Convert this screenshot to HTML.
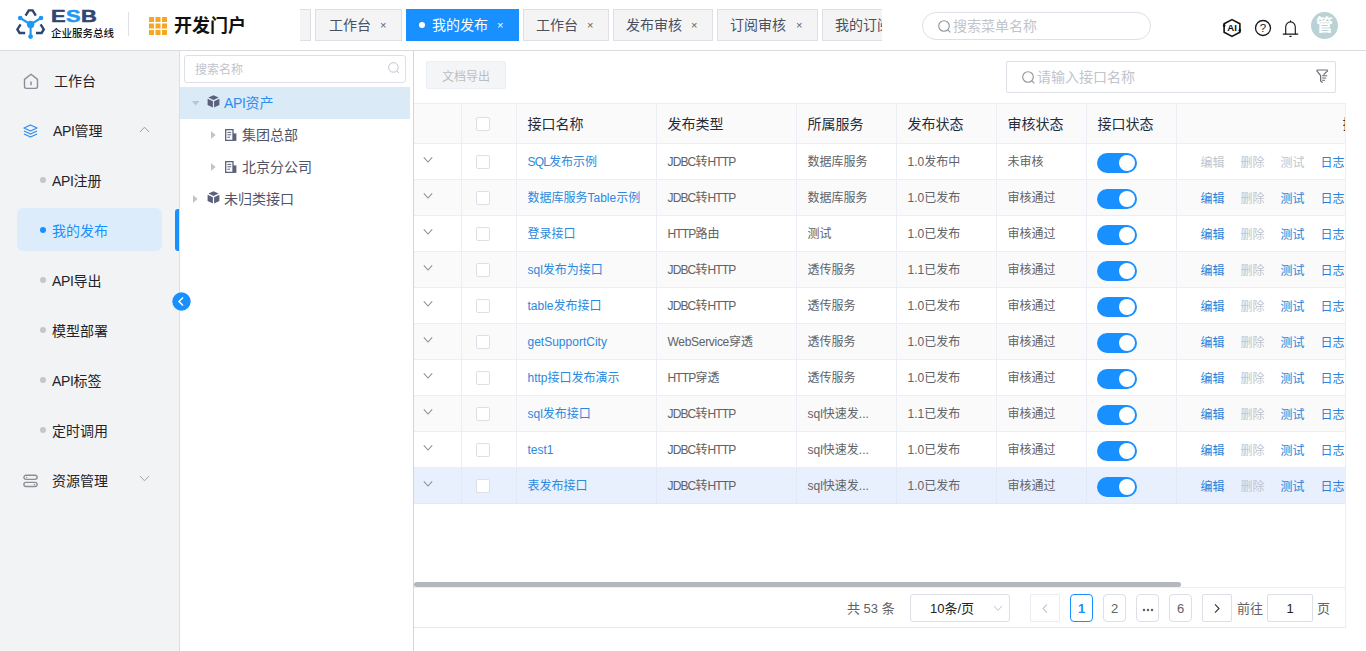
<!DOCTYPE html>
<html lang="zh-CN">
<head>
<meta charset="utf-8">
<title>开发门户</title>
<style>
*{box-sizing:border-box;margin:0;padding:0}
html,body{width:1366px;height:651px;overflow:hidden;background:#fff}
body{font-family:"Liberation Sans","Noto Sans CJK SC",sans-serif;font-size:14px;color:#303133;position:relative}
.abs{position:absolute}
u{text-decoration:none;letter-spacing:-0.35px}
table u{letter-spacing:-0.85px}
/* header */
#hdr{position:absolute;left:0;top:0;width:1366px;height:51px;background:#fff;border-bottom:1px solid #d9dbdf}
#logo-txt{position:absolute;left:51.4px;top:5.9px;font-weight:bold;font-size:17px;line-height:22px;letter-spacing:0.3px;color:#2f4573;transform:scaleX(1.29);transform-origin:0 50%;-webkit-text-stroke:0.5px currentColor}
#logo-txt b{color:#1e96f2}
#logo-sub{position:absolute;left:51px;top:27px;font-size:10.5px;line-height:13px;color:#111;font-weight:500;white-space:nowrap}
#hsep{position:absolute;left:128px;top:12px;width:1px;height:24px;background:#dcdfe6}
#grid{position:absolute;left:149px;top:17px;width:18px;height:18px}
#ptitle{position:absolute;left:174px;top:13px;font-size:18px;line-height:26px;font-weight:bold;color:#111;white-space:nowrap}
#tabs{position:absolute;left:300px;top:9px;width:582px;height:32px;overflow:hidden;white-space:nowrap}
.tab{position:absolute;top:0;height:32px;line-height:30px;border:1px solid #dcdfe6;background:#f4f4f5;color:#495060;font-size:14px;white-space:nowrap}
.tab .x{position:absolute;top:0;font-size:11px;color:#606266}
.tab.on{background:#1890ff;border-color:#1890ff;color:#fff}
.tab.on .x{color:#fff}
#hsearch{position:absolute;left:922px;top:12px;width:229px;height:28px;border:1px solid #dcdfe6;border-radius:14px;background:#fff}
#hsearch span{position:absolute;left:30px;top:0;line-height:26px;font-size:14px;color:#c0c4cc}
#avatar{position:absolute;left:1311px;top:12px;width:27px;height:27px;border-radius:50%;background:#b9d2d4;color:#fff;font-size:17px;font-weight:bold;line-height:28px;text-align:center}
/* sidebar */
#side{position:absolute;left:0;top:51px;width:180px;height:600px;background:#f2f3f5;border-right:1px solid #dddfe3}
.mi{position:absolute;left:0;width:180px;height:50px;line-height:50px;font-size:14px;color:#1f2329;white-space:nowrap}
.mi span{position:absolute;left:54px}
.sub span{position:absolute;left:52px}
.sub i{position:absolute;left:40px;top:21px;width:6px;height:6px;border-radius:50%;background:#c4c6cc}
.sub.on{color:#1890ff}
.sub.on i{background:#1890ff}
#selbg{position:absolute;left:17px;top:157px;width:145px;height:43px;border-radius:6px;background:#dcecfb}
#selbar{position:absolute;left:175px;top:157.5px;width:4px;height:42.5px;background:#1890ff;border-radius:3px 0 0 3px}
/* tree */
#tree{position:absolute;left:180px;top:51px;width:234px;height:600px;background:#fff;border-right:1px solid #d4d6da}
#tsearch{position:absolute;left:4px;top:4px;width:222px;height:28px;border:1px solid #dcdfe6;border-radius:3px}
#tsearch span{position:absolute;left:10px;top:1px;line-height:26px;font-size:12px;color:#c0c4cc}
.tn{position:absolute;left:0;width:230px;height:32px;line-height:32px;font-size:14px;color:#50546a;white-space:nowrap}
.tn.on{background:#dbeaf7;color:#2d8cf0}
/* main */
#main{position:absolute;left:414px;top:51px;width:932px;height:577px;background:#fff;border-bottom:1px solid #e6e8ec}
#btn{position:absolute;left:12px;top:10px;width:80px;height:28px;border:1px solid #ebeef5;background:#f4f5f7;border-radius:2px;color:#bcbec2;font-size:12px;line-height:31px;text-align:center}
#msearch{position:absolute;left:592px;top:10px;width:330px;height:32px;border:1px solid #dcdfe6;border-radius:2px}
#msearch span{position:absolute;left:30px;top:0;line-height:30px;font-size:14px;color:#c0c4cc}
table{position:absolute;left:0;top:52px;width:932px;border-collapse:collapse;table-layout:fixed;font-size:12px;color:#606266}
th,td{border:1px solid #ebeef5;border-left:none;height:36px;padding:0 10px 0 11px;text-align:left;font-weight:normal;white-space:nowrap;overflow:hidden;vertical-align:middle;line-height:20px}
th{height:40px;background:#fafafa;color:#252b3a;font-size:14px;padding-left:11px}
tr.s td{background:#fafafa}
tr.cur td{background:#e8f0fd;border-color:#e1e9f7}
td.lk{color:#2b88dd}
.cb{display:block;width:14px;height:14px;border:1px solid #dcdfe6;border-radius:2px;background:#fff;margin-left:3px}
.sw{display:block;margin-left:-1px;width:40px;height:20px;border-radius:10px;background:#1890ff;position:relative;top:1px}
.sw:after{content:"";position:absolute;right:2px;top:2px;width:16px;height:16px;border-radius:50%;background:#fff}
td.ops{padding-left:24px}
td.ops a{display:inline-block;width:24px;margin-right:16px;color:#2d7fd8;position:relative;top:1px}
td.ops a.d{color:#c0c4cc}
.chev{display:block;width:12px;height:12px;margin-left:-3px;margin-top:-4px}
/* pager */
#pager{position:absolute;left:0;top:543px;width:932px;height:30px;font-size:13px;color:#606266}
.pb{position:absolute;top:0;height:28px;width:23px;border:1px solid #dcdfe6;border-radius:4px;background:#fff;text-align:center;line-height:27px;font-size:13px;color:#606266}
.pb.on{border-color:#1890ff;color:#1890ff;font-weight:bold}
</style>
</head>
<body>
<div id="hdr">
<svg id="logo" class="abs" style="left:14px;top:7px" width="34" height="34" viewBox="0 0 34 34">
<g fill="none" stroke="#2f4573" stroke-width="2.4" stroke-linejoin="miter">
<path d="M11.6 8.6 L14.8 3.4 H18.6 L21.8 8.6"/>
<path d="M6.6 17.4 L3.4 22.4 L5.6 26 H11.2"/>
<path d="M26.6 17.4 L29.8 22.4 L27.6 26 H22"/>
</g>
<g stroke="#1e96f2" stroke-width="2.1" fill="none"><path d="M6.2 11 L16.6 17.4 L27 11 M16.6 17.4 V29.4"/></g>
<g fill="#1e96f2"><circle cx="16.6" cy="17.4" r="3.7"/><circle cx="6.2" cy="11" r="2.3"/><circle cx="27" cy="11" r="2.3"/><circle cx="16.6" cy="29.6" r="2.4"/></g>
</svg>
<div id="logo-txt">E<b>S</b>B</div>
<div id="logo-sub">企业服务总线</div>
<div id="hsep"></div>
<svg id="grid" viewBox="0 0 18 18"><g fill="#f5a623"><rect x="0" y="0" width="5" height="5"/><rect x="6.5" y="0" width="5" height="5"/><rect x="13" y="0" width="5" height="5"/><rect x="0" y="6.5" width="5" height="5"/><rect x="6.5" y="6.5" width="5" height="5"/><rect x="13" y="6.5" width="5" height="5"/><rect x="0" y="13" width="5" height="5"/><rect x="6.5" y="13" width="5" height="5"/><rect x="13" y="13" width="5" height="5"/></g></svg>
<div id="ptitle">开发门户</div>
<div id="tabs">
<div class="tab" style="left:-20px;width:31px"></div>
<div class="tab" style="left:15px;width:87px"><span class="abs" style="left:13px">工作台</span><span class="x" style="left:64px">×</span></div>
<div class="tab on" style="left:106px;width:113px"><i class="abs" style="left:12px;top:12px;width:6px;height:6px;border-radius:50%;background:#fff"></i><span class="abs" style="left:25px">我的发布</span><span class="x" style="left:90px">×</span></div>
<div class="tab" style="left:223px;width:86px"><span class="abs" style="left:12px">工作台</span><span class="x" style="left:63px">×</span></div>
<div class="tab" style="left:313px;width:100px"><span class="abs" style="left:12px">发布审核</span><span class="x" style="left:77px">×</span></div>
<div class="tab" style="left:417px;width:101px"><span class="abs" style="left:12px">订阅审核</span><span class="x" style="left:78px">×</span></div>
<div class="tab" style="left:522px;width:101px"><span class="abs" style="left:12px">我的订阅</span><span class="x" style="left:78px">×</span></div>
</div>
<div id="hsearch"><svg class="abs" style="left:14px;top:6px" width="15" height="15" viewBox="0 0 15 15"><circle cx="7" cy="7" r="5.3" fill="none" stroke="#8f939b" stroke-width="1.1"/><path d="M10.8 10.8 L13.4 13.4" stroke="#8f939b" stroke-width="1.1"/></svg><span>搜索菜单名称</span></div>
<svg class="abs" style="left:1221px;top:17px" width="22" height="22" viewBox="0 0 22 22"><g fill="none" stroke="#111" stroke-width="1.6" stroke-linejoin="round" stroke-linecap="round"><path d="M3.1 8.8 V6.8 L11 2.6 L18.9 6.8 V13"/><path d="M18.9 13.2 V15.2 L11 19.4 L3.1 15.2 V9.2"/></g><circle cx="3.2" cy="8.6" r="1.3" fill="#111"/><circle cx="18.8" cy="13.4" r="1.3" fill="#111"/><text x="11.1" y="14.4" font-family="Liberation Sans, sans-serif" font-weight="bold" font-size="9.6" text-anchor="middle" fill="#111">AI</text></svg>
<svg class="abs" style="left:1254px;top:19px" width="18" height="18" viewBox="0 0 18 18"><circle cx="9" cy="9" r="7.5" fill="none" stroke="#1a1a1a" stroke-width="1.3"/><text x="9" y="13.2" font-family="Liberation Sans, sans-serif" font-size="11.5" text-anchor="middle" fill="#1a1a1a">?</text></svg>
<svg class="abs" style="left:1281px;top:18.7px" width="19" height="19" viewBox="0 0 19 19"><g fill="none" stroke="#1a1a1a" stroke-width="1.15" stroke-linecap="round"><path d="M4.7 15 V8.2 A4.8 5.4 0 0 1 14.3 8.2 V15"/><path d="M2.2 15.1 H16.8"/><path d="M9.5 1.8 V2.6"/><path d="M8.8 17.3 H10.2"/></g></svg>
<div id="avatar">管</div>
</div>
<div id="side">
<div id="selbg"></div><div id="selbar"></div>
<div class="mi" style="top:5px"><svg class="abs" style="left:23px;top:16.5px" width="16" height="17" viewBox="0 0 16 17"><path d="M1.5 6.4 L8 1.2 L14.5 6.4 V13.6 A1.8 1.8 0 0 1 12.7 15.4 H3.3 A1.8 1.8 0 0 1 1.5 13.6 Z" fill="none" stroke="#8a8f99" stroke-width="1.4" stroke-linejoin="round"/><path d="M8 8.4 V12.2" stroke="#8a8f99" stroke-width="1.5"/></svg><span>工作台</span></div>
<div class="mi" style="top:55px"><svg class="abs" style="left:23px;top:18px" width="15" height="14" viewBox="0 0 15 14"><g fill="none" stroke="#2d8cf0" stroke-width="1.3" stroke-linejoin="round"><path d="M7.5 1 L14 4 L7.5 7 L1 4 Z"/><path d="M1 7 L7.5 10 L14 7"/><path d="M1 10 L7.5 13 L14 10"/></g></svg><span style="left:53px"><u>API</u>管理</span><svg class="abs" style="left:139px;top:19.5px" width="11" height="7" viewBox="0 0 11 7"><path d="M1 6 L5.5 1.2 L10 6" fill="none" stroke="#6fa8ea" stroke-width="1"/></svg></div>
<div class="mi sub" style="top:105px"><i></i><span><u>API</u>注册</span></div>
<div class="mi sub on" style="top:155px"><i></i><span>我的发布</span></div>
<div class="mi sub" style="top:205px"><i></i><span><u>API</u>导出</span></div>
<div class="mi sub" style="top:255px"><i></i><span>模型部署</span></div>
<div class="mi sub" style="top:305px"><i></i><span><u>API</u>标签</span></div>
<div class="mi sub" style="top:355px"><i></i><span>定时调用</span></div>
<div class="mi" style="top:405px"><svg class="abs" style="left:23px;top:18px" width="15" height="14" viewBox="0 0 15 14"><g fill="none" stroke="#8a8e96" stroke-width="1.4"><rect x="0.9" y="1.3" width="13.2" height="4.1" rx="2.05"/><rect x="0.9" y="8.4" width="13.2" height="4.1" rx="2.05"/></g><circle cx="3.6" cy="3.35" r="0.7" fill="#8a8e96"/><circle cx="11.4" cy="10.45" r="0.7" fill="#8a8e96"/></svg><span style="left:52px">资源管理</span><svg class="abs" style="left:139px;top:19.3px" width="11" height="7" viewBox="0 0 11 7"><path d="M1 1 L5.5 5.8 L10 1" fill="none" stroke="#a0a4ab" stroke-width="1"/></svg></div>
</div>
<div id="tree">
<div id="tsearch"><span>搜索名称</span><svg class="abs" style="left:202px;top:5px" width="14" height="14" viewBox="0 0 14 14"><circle cx="6.4" cy="6.4" r="4.8" fill="none" stroke="#c0c4cc" stroke-width="1"/><path d="M9.8 9.8 L12 12" stroke="#c0c4cc" stroke-width="1"/></svg></div>
<div class="tn on" style="top:36px"><svg class="abs" style="left:12px;top:14px" width="8" height="5" viewBox="0 0 8 5"><path d="M0 0 H7.4 L3.7 4.4 Z" fill="#c0c4cc"/></svg><svg class="abs cube" style="left:27px;top:8px" width="13" height="13" viewBox="0 0 13 13"><g fill="#5b607d"><path d="M6.5 0.2 L11.6 2.6 L6.5 5 L1.4 2.6 Z"/><path d="M0.6 3.7 L5.9 6.2 V12.6 L0.6 10 Z"/><path d="M12.4 3.7 L7.1 6.2 V12.6 L12.4 10 Z"/></g></svg><span class="abs" style="left:44px"><u>API</u>资产</span></div>
<div class="tn" style="top:68px"><svg class="abs" style="left:31px;top:12px" width="5" height="8" viewBox="0 0 5 8"><path d="M0 0 L4.6 4 L0 8 Z" fill="#c0c4cc"/></svg><svg class="abs" style="left:45px;top:10px" width="12" height="12" viewBox="0 0 12 12"><path d="M0.7 0.7 H8 V11.3 H0.7 Z" fill="none" stroke="#5b607d" stroke-width="1.3"/><path d="M8 4.4 H11.4 V11.9 H8 Z" fill="#5b607d"/><path d="M2.4 3.4 H6.2 M2.4 5.8 H6.2 M2.4 8.2 H5" stroke="#5b607d" stroke-width="1"/></svg><span class="abs" style="left:62px">集团总部</span></div>
<div class="tn" style="top:100px"><svg class="abs" style="left:31px;top:12px" width="5" height="8" viewBox="0 0 5 8"><path d="M0 0 L4.6 4 L0 8 Z" fill="#c0c4cc"/></svg><svg class="abs" style="left:45px;top:10px" width="12" height="12" viewBox="0 0 12 12"><path d="M0.7 0.7 H8 V11.3 H0.7 Z" fill="none" stroke="#5b607d" stroke-width="1.3"/><path d="M8 4.4 H11.4 V11.9 H8 Z" fill="#5b607d"/><path d="M2.4 3.4 H6.2 M2.4 5.8 H6.2 M2.4 8.2 H5" stroke="#5b607d" stroke-width="1"/></svg><span class="abs" style="left:62px">北京分公司</span></div>
<div class="tn" style="top:132px"><svg class="abs" style="left:13px;top:12px" width="5" height="8" viewBox="0 0 5 8"><path d="M0 0 L4.6 4 L0 8 Z" fill="#c0c4cc"/></svg><svg class="abs cube" style="left:27px;top:8px" width="13" height="13" viewBox="0 0 13 13"><g fill="#5b607d"><path d="M6.5 0.2 L11.6 2.6 L6.5 5 L1.4 2.6 Z"/><path d="M0.6 3.7 L5.9 6.2 V12.6 L0.6 10 Z"/><path d="M12.4 3.7 L7.1 6.2 V12.6 L12.4 10 Z"/></g></svg><span class="abs" style="left:44px">未归类接口</span></div>
</div>
<svg class="abs" style="left:171.5px;top:292px" width="19" height="19" viewBox="0 0 19 19"><circle cx="9.5" cy="9.5" r="9.2" fill="#1890ff"/><path d="M11 5.4 L7 9.5 L11 13.6" fill="none" stroke="#fff" stroke-width="1.5"/></svg>
<div id="main">
<div id="btn">文档导出</div>
<div id="msearch"><svg class="abs" style="left:14px;top:8px" width="15" height="15" viewBox="0 0 15 15"><circle cx="7" cy="7" r="5.3" fill="none" stroke="#8f939b" stroke-width="1.1"/><path d="M10.8 10.8 L13.4 13.4" stroke="#8f939b" stroke-width="1.1"/></svg><span>请输入接口名称</span><svg class="abs" style="left:309px;top:7.2px" width="13" height="15" viewBox="0 0 13 15"><g fill="none" stroke="#686c75" stroke-width="1.2" stroke-linejoin="round" stroke-linecap="round"><path d="M7.9 5.4 L11.3 2.1 Q12 1 10.8 1 H1.6 Q0.4 1 1.1 2.1 L4.6 6.6 V12 L6.2 13.4"/><path d="M6.5 6.8 H10.8 M6.5 9 H9.8 M6.5 11.2 H8.6" stroke-width="1.1"/></g></svg></div>
<table>
<colgroup><col style="width:47px"><col style="width:55px"><col style="width:140px"><col style="width:140px"><col style="width:100px"><col style="width:100px"><col style="width:90px"><col style="width:90px"><col></colgroup>
<tr><th></th><th><i class="cb"></i></th><th>接口名称</th><th>发布类型</th><th>所属服务</th><th>发布状态</th><th>审核状态</th><th>接口状态</th><th style="padding-left:166px;text-overflow:clip">操作</th></tr>
<tr class=""><td><svg class="chev" viewBox="0 0 12 12"><path d="M1.8 3.4 L6 8 L10.2 3.4" fill="none" stroke="#8c9097" stroke-width="1.1"/></svg></td><td><i class="cb"></i></td><td class="lk"><u>SQL</u>发布示例</td><td><u>JDBC</u>转<u>HTTP</u></td><td>数据库服务</td><td>1.0发布中</td><td>未审核</td><td><i class="sw"></i></td><td class="ops"><a class="d">编辑</a><a class="d">删除</a><a class="d">测试</a><a>日志</a></td></tr>
<tr class="s"><td><svg class="chev" viewBox="0 0 12 12"><path d="M1.8 3.4 L6 8 L10.2 3.4" fill="none" stroke="#8c9097" stroke-width="1.1"/></svg></td><td><i class="cb"></i></td><td class="lk">数据库服务Table示例</td><td><u>JDBC</u>转<u>HTTP</u></td><td>数据库服务</td><td>1.0已发布</td><td>审核通过</td><td><i class="sw"></i></td><td class="ops"><a>编辑</a><a class="d">删除</a><a>测试</a><a>日志</a></td></tr>
<tr class=""><td><svg class="chev" viewBox="0 0 12 12"><path d="M1.8 3.4 L6 8 L10.2 3.4" fill="none" stroke="#8c9097" stroke-width="1.1"/></svg></td><td><i class="cb"></i></td><td class="lk">登录接口</td><td><u>HTTP</u>路由</td><td>测试</td><td>1.0已发布</td><td>审核通过</td><td><i class="sw"></i></td><td class="ops"><a>编辑</a><a class="d">删除</a><a>测试</a><a>日志</a></td></tr>
<tr class="s"><td><svg class="chev" viewBox="0 0 12 12"><path d="M1.8 3.4 L6 8 L10.2 3.4" fill="none" stroke="#8c9097" stroke-width="1.1"/></svg></td><td><i class="cb"></i></td><td class="lk">sql发布为接口</td><td><u>JDBC</u>转<u>HTTP</u></td><td>透传服务</td><td>1.1已发布</td><td>审核通过</td><td><i class="sw"></i></td><td class="ops"><a>编辑</a><a class="d">删除</a><a>测试</a><a>日志</a></td></tr>
<tr class=""><td><svg class="chev" viewBox="0 0 12 12"><path d="M1.8 3.4 L6 8 L10.2 3.4" fill="none" stroke="#8c9097" stroke-width="1.1"/></svg></td><td><i class="cb"></i></td><td class="lk">table发布接口</td><td><u>JDBC</u>转<u>HTTP</u></td><td>透传服务</td><td>1.0已发布</td><td>审核通过</td><td><i class="sw"></i></td><td class="ops"><a>编辑</a><a class="d">删除</a><a>测试</a><a>日志</a></td></tr>
<tr class="s"><td><svg class="chev" viewBox="0 0 12 12"><path d="M1.8 3.4 L6 8 L10.2 3.4" fill="none" stroke="#8c9097" stroke-width="1.1"/></svg></td><td><i class="cb"></i></td><td class="lk">getSupportCity</td><td><u style="letter-spacing:-0.3px">WebService</u>穿透</td><td>透传服务</td><td>1.0已发布</td><td>审核通过</td><td><i class="sw"></i></td><td class="ops"><a>编辑</a><a class="d">删除</a><a>测试</a><a>日志</a></td></tr>
<tr class=""><td><svg class="chev" viewBox="0 0 12 12"><path d="M1.8 3.4 L6 8 L10.2 3.4" fill="none" stroke="#8c9097" stroke-width="1.1"/></svg></td><td><i class="cb"></i></td><td class="lk">http接口发布演示</td><td><u>HTTP</u>穿透</td><td>透传服务</td><td>1.0已发布</td><td>审核通过</td><td><i class="sw"></i></td><td class="ops"><a>编辑</a><a class="d">删除</a><a>测试</a><a>日志</a></td></tr>
<tr class="s"><td><svg class="chev" viewBox="0 0 12 12"><path d="M1.8 3.4 L6 8 L10.2 3.4" fill="none" stroke="#8c9097" stroke-width="1.1"/></svg></td><td><i class="cb"></i></td><td class="lk">sql发布接口</td><td><u>JDBC</u>转<u>HTTP</u></td><td>sql快速发...</td><td>1.1已发布</td><td>审核通过</td><td><i class="sw"></i></td><td class="ops"><a>编辑</a><a class="d">删除</a><a>测试</a><a>日志</a></td></tr>
<tr class=""><td><svg class="chev" viewBox="0 0 12 12"><path d="M1.8 3.4 L6 8 L10.2 3.4" fill="none" stroke="#8c9097" stroke-width="1.1"/></svg></td><td><i class="cb"></i></td><td class="lk">test1</td><td><u>JDBC</u>转<u>HTTP</u></td><td>sql快速发...</td><td>1.0已发布</td><td>审核通过</td><td><i class="sw"></i></td><td class="ops"><a>编辑</a><a class="d">删除</a><a>测试</a><a>日志</a></td></tr>
<tr class="cur"><td><svg class="chev" viewBox="0 0 12 12"><path d="M1.8 3.4 L6 8 L10.2 3.4" fill="none" stroke="#8c9097" stroke-width="1.1"/></svg></td><td><i class="cb"></i></td><td class="lk">表发布接口</td><td><u>JDBC</u>转<u>HTTP</u></td><td>sql快速发...</td><td>1.0已发布</td><td>审核通过</td><td><i class="sw"></i></td><td class="ops"><a>编辑</a><a class="d">删除</a><a>测试</a><a>日志</a></td></tr>
</table>
<div class="abs" style="left:0;top:531px;width:767px;height:5px;border-radius:3px;background:#b4b7bb"></div>
<div class="abs" style="left:0;top:536px;width:932px;height:1px;background:#ebeef5"></div>
<div class="abs" style="left:931px;top:52px;width:1px;height:525px;background:#ebeef5"></div>
<div id="pager">
<span class="abs" style="left:433px;top:0;line-height:29px;white-space:nowrap">共 53 条</span>
<div class="pb" style="left:496px;width:100px;color:#222;text-align:left;padding-left:19px;border-radius:3px">10条/页<svg class="abs" style="left:82px;top:10px" width="10" height="7" viewBox="0 0 10 7"><path d="M1 1 L5 5.4 L9 1" fill="none" stroke="#c0c4cc" stroke-width="1"/></svg></div>
<div class="pb" style="left:616px;width:30px;border-radius:2px;border-color:#e9ecf2"><svg class="abs" style="left:10px;top:8px" width="8" height="11" viewBox="0 0 8 11"><path d="M6 1.4 L2 5.5 L6 9.6" fill="none" stroke="#c0c4cc" stroke-width="1.1"/></svg></div>
<div class="pb on" style="left:656px">1</div>
<div class="pb" style="left:689px">2</div>
<div class="pb" style="left:722px"><svg class="abs" style="left:5px;top:12.5px" width="12" height="4" viewBox="0 0 12 4"><circle cx="2" cy="2" r="1.25" fill="#606266"/><circle cx="6" cy="2" r="1.25" fill="#606266"/><circle cx="10" cy="2" r="1.25" fill="#606266"/></svg></div>
<div class="pb" style="left:755px">6</div>
<div class="pb" style="left:788px;width:30px;border-radius:2px"><svg class="abs" style="left:10px;top:8px" width="8" height="11" viewBox="0 0 8 11"><path d="M2 1.4 L6 5.5 L2 9.6" fill="none" stroke="#303133" stroke-width="1.1"/></svg></div>
<span class="abs" style="left:823px;top:0;line-height:29px;white-space:nowrap">前往</span>
<div class="pb" style="left:853px;width:46px;color:#222;border-radius:2px">1</div>
<span class="abs" style="left:903px;top:0;line-height:29px">页</span>
</div>
</div>
</body>
</html>
